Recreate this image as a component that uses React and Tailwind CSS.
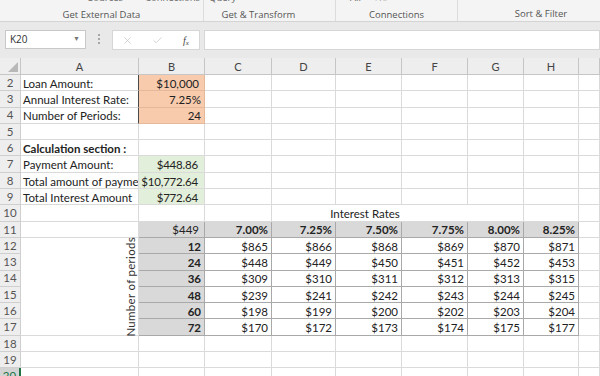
import { X, Check } from 'lucide-react';

const cols = ['A', 'B', 'C', 'D', 'E', 'F', 'G', 'H', 'I'];

const rates = ['7.00%', '7.25%', '7.50%', '7.75%', '8.00%', '8.25%'];
const table = [
  ['12', '$865', '$866', '$868', '$869', '$870', '$871'],
  ['24', '$448', '$449', '$450', '$451', '$452', '$453'],
  ['36', '$309', '$310', '$311', '$312', '$313', '$315'],
  ['48', '$239', '$241', '$242', '$243', '$244', '$245'],
  ['60', '$198', '$199', '$200', '$202', '$203', '$204'],
  ['72', '$170', '$172', '$173', '$174', '$175', '$177'],
];

const base = 'border-r border-b border-[#dadada] bg-white';
const tcell = 'border-r border-b border-[#a9a9a9]';

function Cell({ children, className = base, align = 'left', bold = false }) {
  return (
    <div
      className={`flex items-end overflow-hidden whitespace-nowrap pb-[1px] ${className} ${
        align === 'right' ? 'justify-end pr-[3px]' : 'pl-[2px]'
      } ${bold ? 'font-bold' : ''}`}
    >
      {children}
    </div>
  );
}

function RowHead({ n, active }) {
  return (
    <div
      className={`flex items-center justify-center border-b ${
        active
          ? 'border-r-2 border-r-[#217346] border-b-[#c6c6c6] bg-[#d3d3d3] text-[#217346]'
          : 'border-r border-[#cfcfcf] bg-[#eeeeee] text-[#555]'
      }`}
    >
      {n}
    </div>
  );
}

function buildRow(n) {
  const out = [];
  const empty = (k) => <Cell key={k} />;
  if (n === 2 || n === 3 || n === 4) {
    const label = { 2: 'Loan Amount:', 3: 'Annual Interest Rate:', 4: 'Number of Periods:' }[n];
    const val = { 2: '$10,000', 3: '7.25%', 4: '24' }[n];
    out.push(<Cell key="A" className="border-r border-r-[#4a4a4a] border-b border-b-[#dadada] bg-white">{label}</Cell>);
    out.push(
      <Cell key="B" className="border-r border-b border-[#e4b99b] bg-[#f8cbad]" align="right">
        <span className={n === 2 ? 'pr-[2px]' : ''}>{val}</span>
      </Cell>
    );
    for (let i = 2; i < 9; i++) out.push(empty(cols[i]));
    return out;
  }
  if (n === 6) {
    out.push(<Cell key="A" bold>Calculation section :</Cell>);
    for (let i = 1; i < 9; i++) out.push(empty(cols[i]));
    return out;
  }
  if (n >= 7 && n <= 9) {
    const label = { 7: 'Payment Amount:', 8: 'Total amount of payme', 9: 'Total Interest Amount' }[n];
    const val = { 7: '$448.86', 8: '$10,772.64', 9: '$772.64' }[n];
    out.push(<Cell key="A">{label}</Cell>);
    out.push(
      <Cell key="B" className="border-r border-b border-[#dadada] bg-[#e2efda]" align="right">
        <span className="pr-[3px] tracking-[-0.2px]">{val}</span>
      </Cell>
    );
    for (let i = 2; i < 9; i++) out.push(empty(cols[i]));
    return out;
  }
  if (n === 10) {
    out.push(empty('A'), empty('B'), empty('C'));
    out.push(
      <div key="D" className="col-span-3 flex items-end justify-center border-b border-[#dadada] bg-white pb-[1px] pr-[10px]">
        Interest Rates
      </div>
    );
    out.push(empty('G'), empty('H'), empty('I'));
    return out;
  }
  if (n === 11) {
    out.push(empty('A'));
    out.push(<Cell key="B" className={`${tcell} bg-[#d9d9d9]`} align="right"><span className="pr-[2px]">$449</span></Cell>);
    rates.forEach((r, i) => (
      out.push(<Cell key={`r${i}`} className={`${tcell} bg-[#d9d9d9]`} align="right" bold>{r}</Cell>)
    ));
    out.push(empty('I'));
    return out;
  }
  if (n >= 12 && n <= 17) {
    const row = table[n - 12];
    if (n === 12) {
      out.push(
        <div key="A" className="row-span-6 flex items-center justify-end border-r border-b border-[#dadada] bg-white pr-[2px]">
          <span className="rotate-180 whitespace-nowrap text-[11.5px] tracking-[0.3px] text-[#333] [writing-mode:vertical-rl]">Number of periods</span>
        </div>
      );
    }
    out.push(<Cell key="B" className={`${tcell} bg-[#d9d9d9]`} align="right" bold>{row[0]}</Cell>);
    row.slice(1).forEach((v, i) => (
      out.push(<Cell key={`v${i}`} className={`${tcell} bg-white`} align="right">{v}</Cell>)
    ));
    out.push(empty('I'));
    return out;
  }
  for (let i = 0; i < 9; i++) out.push(empty(cols[i]));
  return out;
}

export default function App() {
  const rows = [];
  for (let n = 2; n <= 20; n++) rows.push(n);

  return (
    <div className="h-[376px] w-[600px] overflow-hidden bg-[#e9e9e9]" style={{ fontFamily: 'Lato, "Open Sans", sans-serif' }}>
      {/* Ribbon group labels */}
      <div className="relative flex h-[22px] overflow-hidden border-b border-[#d4d4d4] bg-[#f4f4f4] text-[9.5px] text-[#555]" style={{ fontFamily: '"Open Sans", sans-serif' }}>
        <div className="relative flex w-[204px] flex-col items-center border-r border-[#dcdcdc]">
          <div className="-mt-[9px] flex h-[12px] w-full gap-[22px] pl-[88px] text-[#666]">
            <span>Sources</span>
            <span>Connections</span>
          </div>
          <span className="mt-[5px]">Get External Data</span>
        </div>
        <div className="flex w-[132px] flex-col items-center border-r border-[#dcdcdc] pr-[22px]">
          <div className="-mt-[9px] h-[12px] w-full pl-[5px] text-[#666]">Query</div>
          <span className="mt-[5px]">Get &amp; Transform</span>
        </div>
        <div className="flex w-[122px] flex-col items-center border-r border-[#dcdcdc]">
          <div className="-mt-[9px] flex h-[12px] w-full gap-[14px] pl-[14px] text-[#666]">
            <span>All</span>
            <span className="text-[#bbb]">No</span>
          </div>
          <span className="mt-[5px]">Connections</span>
        </div>
        <div className="flex flex-1 flex-col items-center pl-[24px]">
          <div className="-mt-[9px] h-[12px]" />
          <span className="mt-[5px]">Sort &amp; Filter</span>
        </div>
      </div>

      {/* Formula bar */}
      <div className="flex h-[36px] items-start pt-[8px]">
        <div className="ml-[5px] flex h-[19px] w-[81px] items-center justify-between border border-[#c8c8c8] bg-white pl-[4px] pr-[5px] text-[10px] text-[#333]" style={{ fontFamily: '"Open Sans", sans-serif' }}>
          <span>K20</span>
          <span className="text-[7px] text-[#777]">▼</span>
        </div>
        <div className="flex w-[26px] flex-col items-center gap-[2px] pt-[4px]">
          <span className="h-[2px] w-[2px] bg-[#a8a8a8]" />
          <span className="h-[2px] w-[2px] bg-[#a8a8a8]" />
          <span className="h-[2px] w-[2px] bg-[#a8a8a8]" />
        </div>
        <div className="flex h-[20px] w-[88px] items-center border border-[#d6d6d6] bg-white pl-[9px]">
          <X size={11} strokeWidth={1.5} className="text-[#c2c2c2]" />
          <Check size={11} strokeWidth={1.5} className="ml-[19px] text-[#c2c2c2]" />
          <span className="ml-[20px] text-[10px] italic text-[#444]" style={{ fontFamily: '"Liberation Serif", serif' }}>
            f<sub className="text-[7px]">x</sub>
          </span>
        </div>
        <div className="ml-[4px] h-[20px] flex-1 border border-[#d6d6d6] bg-white" />
      </div>

      {/* Sheet */}
      <div
        className="grid grid-cols-[21px_118px_66px_67px_64px_66px_66px_56px_55px_1fr] grid-rows-[17px_repeat(19,16.3px)] text-[11.5px] leading-none text-[#222]"
      >
        <div className="relative border-r border-b border-[#c6c6c6] bg-[#eeeeee]">
          <div className="absolute bottom-[2px] right-[2px] h-0 w-0 border-b-[10px] border-l-[10px] border-b-[#b8b8b8] border-l-transparent" />
        </div>
        {cols.map((c) => (
          <div key={c} className="flex items-center justify-center border-r border-b border-[#c6c6c6] bg-[#eeeeee] text-[11px] text-[#444]">
            {c === 'I' ? '' : c}
          </div>
        ))}
        {rows.map((n) => [<RowHead key={`h${n}`} n={n} active={n === 20} />, ...buildRow(n).map((el, i) => ({ ...el, key: `${n}-${el.key ?? i}` }))])}
      </div>
    </div>
  );
}
